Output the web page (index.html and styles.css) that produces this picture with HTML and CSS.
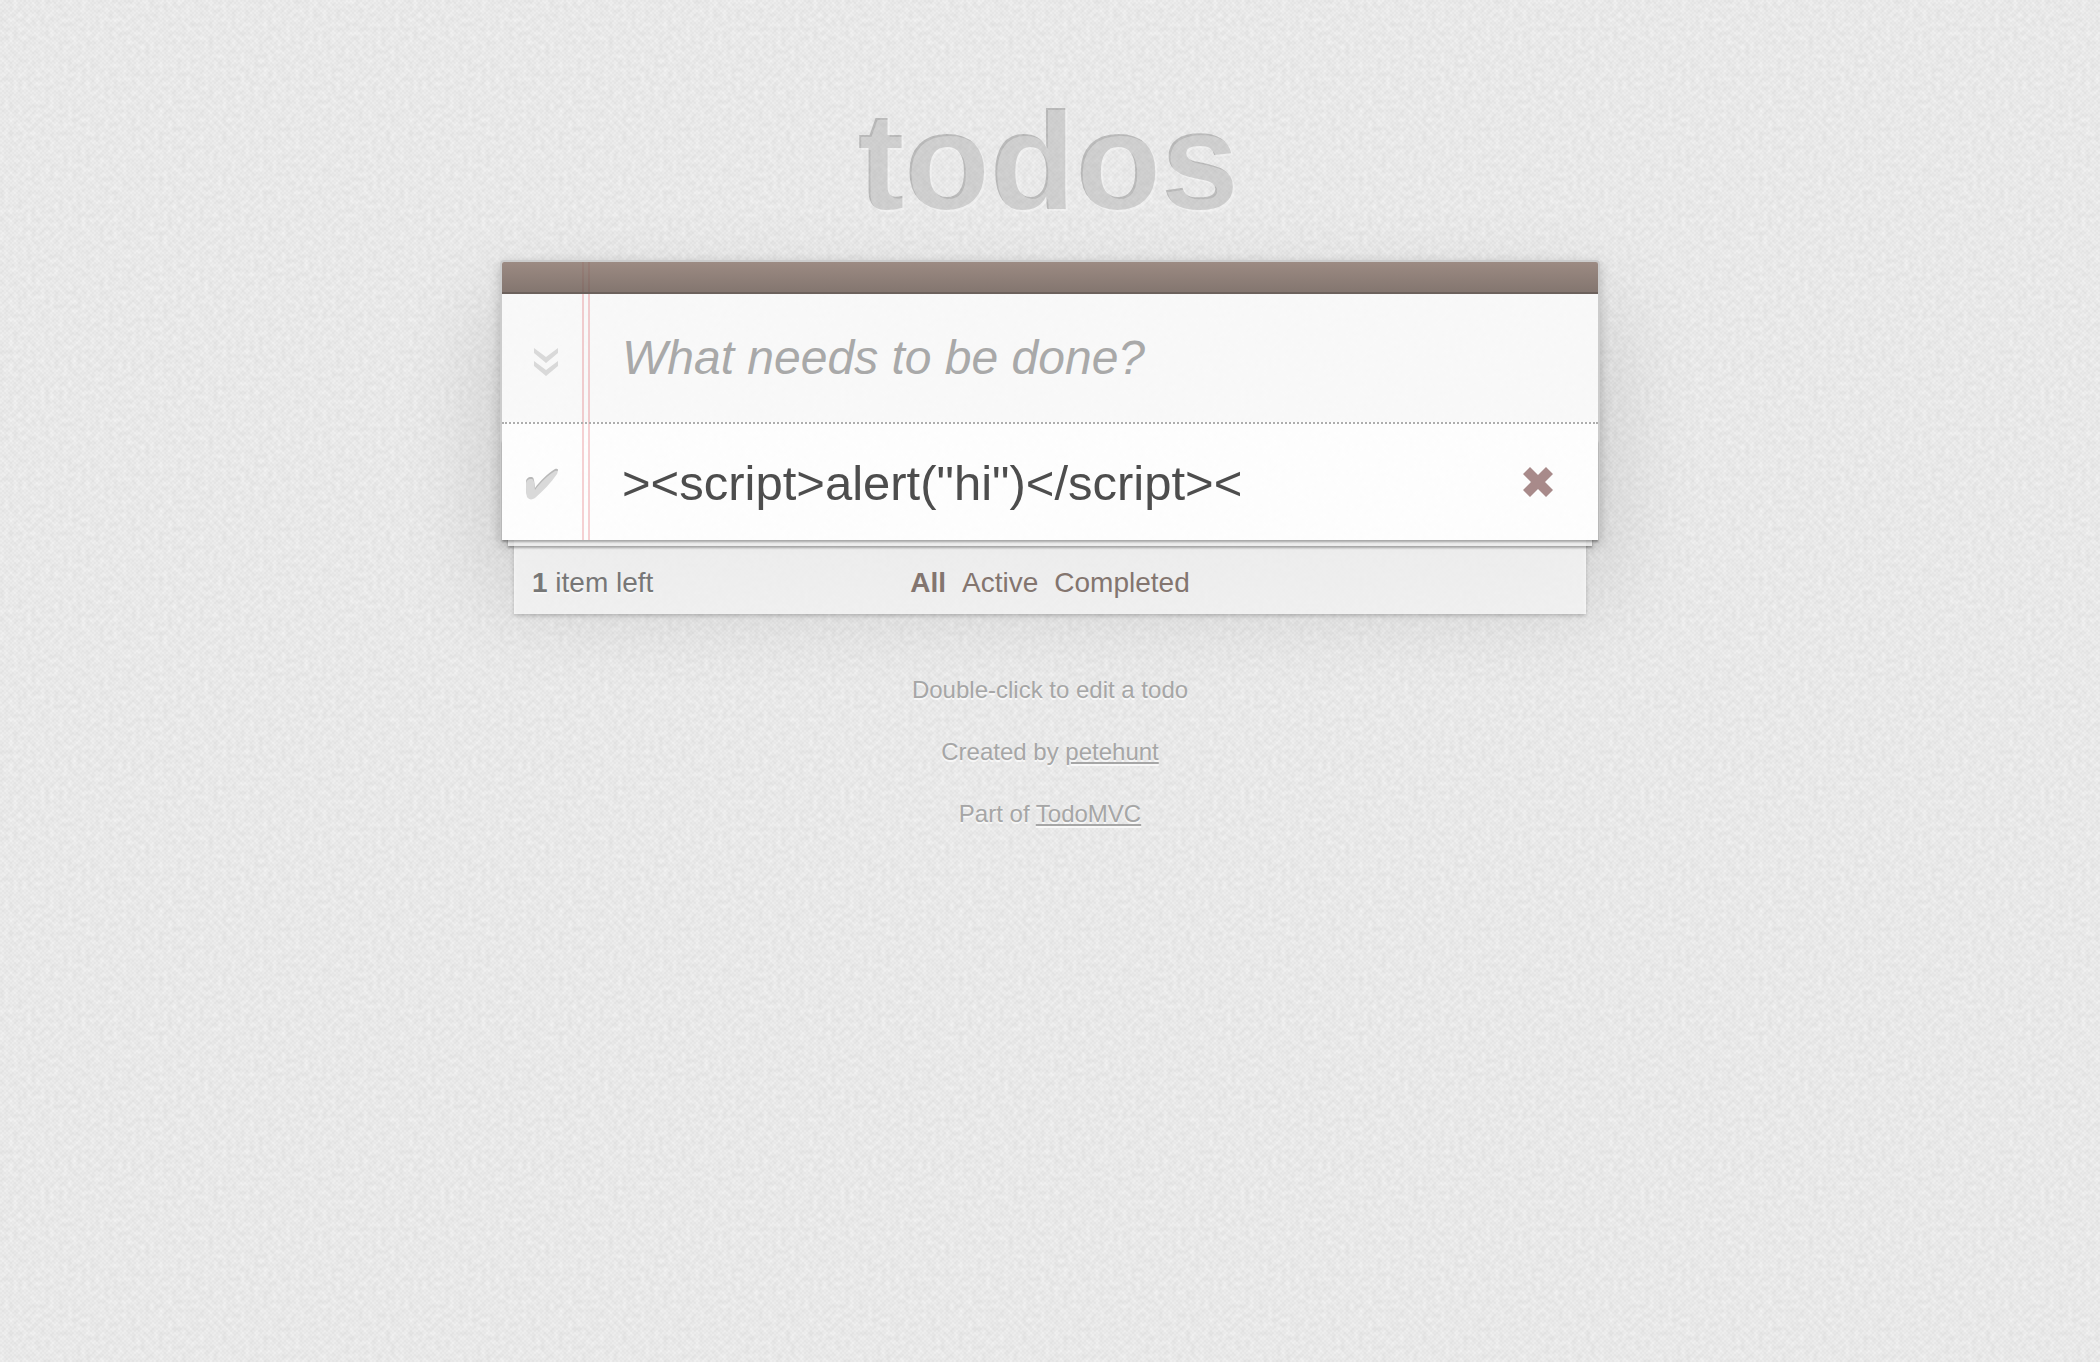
FILE: index.html
```
<!DOCTYPE html>
<html lang="en">
<head>
  <meta charset="utf-8">
  <title>todos</title>
  <link rel="stylesheet" href="styles.css">
</head>
<body>
  <section class="todoapp">
    <h1 class="title">todos</h1>
    <div class="card">
      <header class="card-header">
        <input class="new-todo" type="text" placeholder="What needs to be done?" aria-label="New todo">
      </header>
      <main class="main">
        <label class="toggle toggle-all">
          <input class="toggle-box" type="checkbox" aria-label="Mark all as complete">
          <svg class="toggle-icon" width="24" height="28" viewBox="0 0 24 28" aria-hidden="true">
            <path d="M0 0L12 9L24 0V5L12 15L0 5ZM0 13L12 22L24 13V18L12 28L0 18Z" fill="#d9d9d9"/>
          </svg>
        </label>
        <ul class="todo-list">
          <li class="todo">
            <label class="toggle">
              <input class="toggle-box" type="checkbox" aria-label="Mark as complete">
              <svg class="toggle-icon" width="34" height="40" viewBox="0 -6 34 40" aria-hidden="true">
                <path d="M1 14C1 11 3 9 6 9C9 9 9 11 10 20C15 13 23 5 30 1C33 0 34 2 32 4C26 13 18 21 10 28C7 30 4 30 2 27C1 24 1 19 1 14Z" fill="#b8b8b8"/>
                <path d="M1 16C1 13 3 11 6 11C9 11 9 13 10 22C15 15 23 7 30 3C33 2 33 4 32 6C26 15 18 23 10 30C7 32 4 32 2 29C1 26 1 21 1 16Z" fill="#d9d9d9"/>
              </svg>
            </label>
            <span class="todo-text">&gt;&lt;script&gt;alert("hi")&lt;/script&gt;&lt;</span>
            <button class="destroy" type="button" aria-label="Delete">
              <svg width="32" height="32" viewBox="0 0 32 32" aria-hidden="true">
                <path d="M8 1L16 9L24 1L31 8L23 16L31 24L24 31L16 23L8 31L1 24L9 16L1 8Z" fill="#a88a8a"/>
              </svg>
            </button>
          </li>
        </ul>
      </main>
      <div class="stack" aria-hidden="true"></div>
    </div>
    <footer class="footer">
      <span class="count"><strong>1</strong> item left</span>
      <ul class="filters">
        <li><a class="selected" href="#/">All</a></li>
        <li><a href="#/active">Active</a></li>
        <li><a href="#/completed">Completed</a></li>
      </ul>
    </footer>
  </section>
  <div class="info">
    <p>Double-click to edit a todo</p>
    <p>Created by <a href="#petehunt">petehunt</a></p>
    <p>Part of <a href="#todomvc">TodoMVC</a></p>
  </div>
</body>
</html>
```
FILE: styles.css
```
*,
*::before {
  box-sizing: border-box;
}

/* Woven paper: soft noise under a fine checker of threads */
body {
  margin: 0;
  min-height: 100vh;
  color: #4d4d4d;
  font: 28px/40px "Liberation Sans", Arial, sans-serif;
  background: #eaeaea url("data:image/svg+xml,%3Csvg xmlns='http://www.w3.org/2000/svg' width='400' height='400'%3E%3Cfilter id='n' x='0' y='0' width='100%25' height='100%25' color-interpolation-filters='sRGB'%3E%3CfeTurbulence type='fractalNoise' baseFrequency='.22' numOctaves='1' seed='4' stitchTiles='stitch'/%3E%3CfeColorMatrix values='.09 0 0 0 .876 .09 0 0 0 .876 .09 0 0 0 .876 0 0 0 0 1'/%3E%3C/filter%3E%3Cpattern id='w' width='4' height='4' patternUnits='userSpaceOnUse'%3E%3Cpath d='M0 0h2v2h2v2h-2v-2h-2z' fill-opacity='.02'/%3E%3C/pattern%3E%3Crect width='400' height='400' filter='url(%23n)'/%3E%3Crect width='400' height='400' fill='url(%23w)'/%3E%3C/svg%3E");
}

ul {
  margin: 0;
  padding: 0;
  list-style: none;
}

.todoapp {
  max-width: 1100px;
  margin: 0 auto;
}

.title {
  margin: 0;
  padding: 83px 0 17px;
  font-size: 140px;
  line-height: 160px;
  text-align: center;
  color: rgba(255, 255, 255, .3);
  text-shadow: -2px -2px 0 rgba(0, 0, 0, .2);
}

.card {
  position: relative;
  background: rgba(255, 255, 255, .9);
  border: 2px solid #ccc;
  border-bottom: 0;
  border-radius: 4px 4px 0 0;
  box-shadow: 0 4px 12px rgba(0, 0, 0, .2), 0 50px 100px rgba(0, 0, 0, .15);
}

/* Double margin rule of the notepad */
.card::before {
  content: "";
  position: absolute;
  top: 0;
  bottom: 0;
  left: 80px;
  width: 8px;
  border: solid #f5d0d2;
  border-width: 0 2px;
}

.card-header {
  position: relative;
}

.card-header::before {
  content: "";
  display: block;
  height: 32px;
  border-bottom: 2px solid #6c615c;
  border-radius: 2px 2px 0 0;
  background: linear-gradient(rgba(132, 110, 100, .8), rgba(101, 84, 76, .8));
}

.new-todo {
  display: block;
  width: 100%;
  height: 128px;
  padding: 0 32px 2px 120px;
  border: 0;
  outline: 0;
  background: rgba(0, 0, 0, .02);
  color: inherit;
  font: 48px "Liberation Sans", Arial, sans-serif;
}

.new-todo::placeholder {
  color: #a9a9a9;
  font-style: italic;
  opacity: 1;
}

.main {
  position: relative;
  border-top: 2px dotted #adadad;
}

.toggle {
  display: grid;
  flex: none;
  width: 80px;
  place-items: center;
}

.toggle-box,
.toggle-icon {
  grid-area: 1 / 1;
}

.toggle-box {
  appearance: none;
  width: 60px;
  height: 60px;
  margin: 0;
}

.toggle-all {
  position: absolute;
  top: -92px;
  left: 4px;
}

.todo {
  display: flex;
  align-items: center;
  padding-right: 44px;
  font-size: 49px;
}

.todo-text {
  flex: 1;
  padding: 31px 0 29px 40px;
  line-height: 56px;
  overflow-wrap: anywhere;
}

.destroy {
  display: grid;
  padding: 0;
  border: 0;
  background: none;
}

/* Sheets of paper lying under the card */
.stack {
  position: absolute;
  right: 0;
  bottom: 0;
  left: 0;
  height: 100px;
  pointer-events: none;
  box-shadow: 0 2px 2px rgba(0, 0, 0, .3),
    0 12px 0 -6px rgba(255, 255, 255, .8),
    0 14px 2px -6px rgba(0, 0, 0, .3),
    0 86px 0 -12px rgba(255, 255, 255, .8),
    0 88px 4px -12px rgba(0, 0, 0, .2);
}

.footer {
  position: relative;
  display: grid;
  grid-template-columns: 1fr auto 1fr;
  padding: 23px 32px 12px;
  color: #777;
}

.count {
  text-shadow: 0 2px 0 rgba(255, 255, 255, .5);
}

.filters {
  display: flex;
  gap: 16px;
}

.filters a {
  color: #83756f;
  text-decoration: none;
}

.filters .selected {
  font-weight: bold;
}

.info {
  padding-top: 56px;
  color: #a6a6a6;
  font-size: 24px;
  line-height: 38px;
  text-align: center;
  text-shadow: 0 2px 0 rgba(255, 255, 255, .7);
}

.info p {
  margin: 0 0 24px;
}

.info a {
  color: inherit;
}
```
